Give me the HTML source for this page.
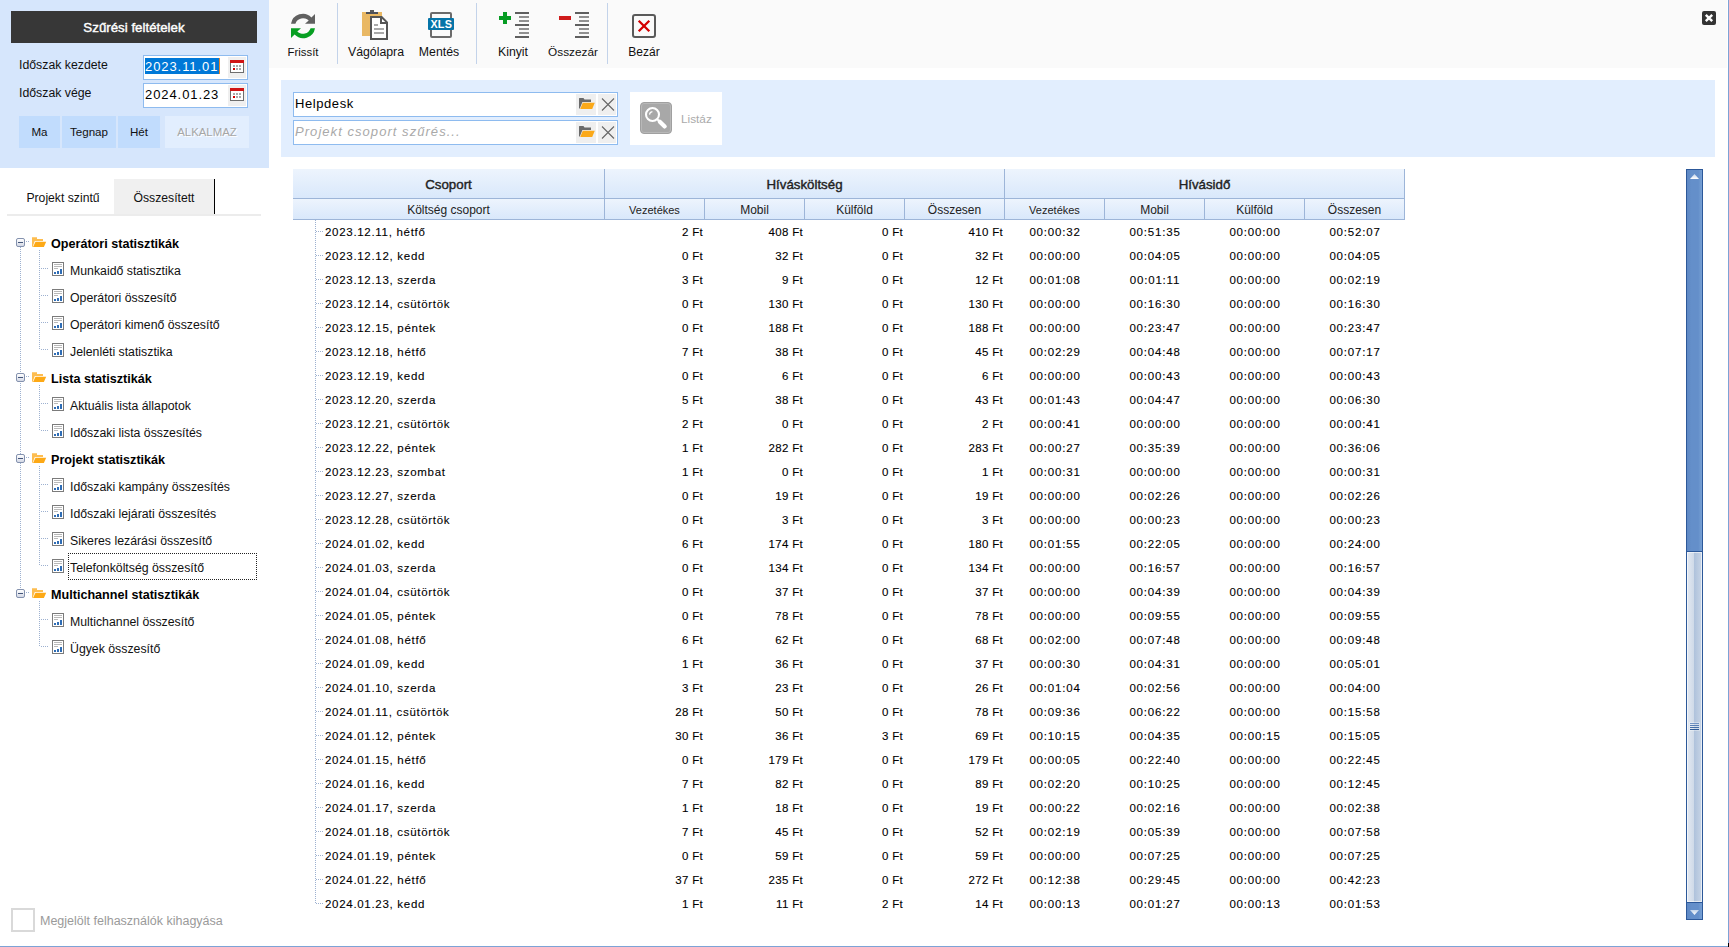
<!DOCTYPE html>
<html>
<head>
<meta charset="utf-8">
<title>Telefonköltség összesítő</title>
<style>
*{box-sizing:border-box;margin:0;padding:0}
html,body{width:1729px;height:947px;overflow:hidden;background:#fff}
body{font-family:"Liberation Sans",sans-serif;color:#000;position:relative}
.a{position:absolute;white-space:nowrap}
svg{position:absolute;display:block;overflow:visible}
#lp{left:0;top:0;width:269px;height:168px;background:#d6e6fc}
#ttl{left:11px;top:11px;width:246px;height:32px;background:#373737;color:#fff;font-size:13.3px;-webkit-text-stroke:0.4px #fff;line-height:33px;text-align:center}
.lbl{font-size:12.3px;line-height:16px;color:#111}
.din{left:143px;width:105px;height:25px;background:#fff;border:1px solid #8ebbef}
.din .t{left:1px;top:2px;height:17px;line-height:17px;font-size:13px;letter-spacing:0.92px;color:#000}
.din .cal{left:84px;top:1px;width:18px;height:21px;background:#efefef}
.qb{top:116px;height:32px;background:#c1dcfd;font-size:11.6px;line-height:32px;text-align:center;color:#111}
.tab{top:179px;height:35px;font-size:12.2px;line-height:38px;text-align:center;color:#111}
.tg{font-weight:bold;font-size:12.6px;line-height:16px;left:51px;color:#000}
.tl{font-size:12.3px;line-height:16px;left:70px;color:#111}
.vd{width:1px;background-image:linear-gradient(#9db1d0 50%,transparent 50%);background-size:1px 2px}
.hd{height:1px;background-image:linear-gradient(90deg,#9db1d0 50%,transparent 50%);background-size:2px 1px}
.ex{width:9px;height:9px;border:1px solid #8492ae;border-radius:2px;background:linear-gradient(#fff,#d4d9e6)}
.ex i{position:absolute;left:1px;top:3px;width:5px;height:1px;background:#44567a}
#tb{left:269px;top:0;width:1458px;height:68px;background:#fafafa}
.tbl{top:44px;font-size:12.3px;line-height:16px;color:#111;text-align:center}
.sep{top:3px;width:1px;height:61px;background:#c3d3ea}
#fb{left:281px;top:80px;width:1434px;height:77px;background:#e2eefe}
.fin{left:293px;width:325px;height:25px;background:#fff;border:1px solid #8ebbef}
.fin .t{left:1px;top:2px;line-height:18px;font-size:13px;letter-spacing:0.58px}
.fin .b{top:1px;height:21px;background:#efefef}
.hc{background:linear-gradient(#edf4fd,#d9e8fb);border-right:1px solid #9db5d8;border-bottom:1px solid #9db5d8;text-align:center;color:#222}
.h1{top:169px;height:30px;font-size:13.3px;-webkit-text-stroke:0.4px #222;line-height:31px}
.h2{top:199px;height:21px;font-size:12px;line-height:22px}
#rows{left:293px;top:220px;width:1112px}
.r{position:relative;height:24px;font-size:11.5px;line-height:24px;letter-spacing:0.7px;color:#000;-webkit-text-stroke:0.1px #000}
.r span{position:absolute;top:0;white-space:nowrap}
.r .c0{left:32px}
.r .m{text-align:right;width:98px;letter-spacing:0.32px}
.r .tm{text-align:center;width:100px;letter-spacing:0.8px}
</style>
</head>
<body>
<!-- LEFT PANEL -->
<div class="a" id="lp"></div>
<div class="a" id="ttl">Szűrési feltételek</div>
<div class="a lbl" style="left:19px;top:57px">Időszak kezdete</div>
<div class="a lbl" style="left:19px;top:85px">Időszak vége</div>
<div class="a din" style="top:55px"><div class="a" style="left:1px;top:2px;width:74px;height:16px;background:#0078d7"></div><div class="a t" style="color:#fff">2023.11.01</div><div class="a" style="left:75px;top:2px;width:1px;height:16px;background:#e8862a"></div><div class="a cal"><svg style="left:2px;top:3px" width="14" height="13" viewBox="0 0 14 13" shape-rendering="crispEdges"><rect x="0.5" y="0.5" width="13" height="12" fill="#fff" stroke="#6e6e6e"/><rect x="0" y="0" width="14" height="3" fill="#d01414"/><rect x="3" y="5" width="2" height="2" fill="#aaa"/><rect x="6" y="5" width="2" height="2" fill="#aaa"/><rect x="9" y="5" width="2" height="2" fill="#aaa"/><rect x="3" y="8" width="2" height="2" fill="#d40000"/><rect x="6" y="8" width="2" height="2" fill="#aaa"/><rect x="9" y="8" width="2" height="2" fill="#aaa"/></svg></div></div>
<div class="a din" style="top:83px"><div class="a t">2024.01.23</div><div class="a cal"><svg style="left:2px;top:3px" width="14" height="13" viewBox="0 0 14 13" shape-rendering="crispEdges"><rect x="0.5" y="0.5" width="13" height="12" fill="#fff" stroke="#6e6e6e"/><rect x="0" y="0" width="14" height="3" fill="#d01414"/><rect x="3" y="5" width="2" height="2" fill="#aaa"/><rect x="6" y="5" width="2" height="2" fill="#aaa"/><rect x="9" y="5" width="2" height="2" fill="#aaa"/><rect x="3" y="8" width="2" height="2" fill="#d40000"/><rect x="6" y="8" width="2" height="2" fill="#aaa"/><rect x="9" y="8" width="2" height="2" fill="#aaa"/></svg></div></div>
<div class="a qb" style="left:19px;width:41px">Ma</div>
<div class="a qb" style="left:62px;width:54px">Tegnap</div>
<div class="a qb" style="left:118px;width:42px">Hét</div>
<div class="a qb" style="left:165px;width:84px;background:#e2eefe;color:#a6a6a6;font-size:11.4px;text-shadow:1px 1px 0 #fff">ALKALMAZ</div>
<!-- TABS -->
<div class="a tab" style="left:13px;width:100px">Projekt szintű</div>
<div class="a tab" style="left:114px;width:100px;background:#f0f0f0">Összesített</div>
<div class="a" style="left:214px;top:179px;width:1px;height:35px;background:#000"></div>
<div class="a" style="left:7px;top:214px;width:254px;height:2px;background:#ececec"></div>
<!-- TREE -->
<div class="a vd" style="left:20px;top:247px;height:342px"></div>
<div class="a ex" style="left:16px;top:238px"><i></i></div>
<div class="a hd" style="left:26px;top:241px;width:4px"></div>
<svg style="left:32px;top:237px" width="15" height="10" viewBox="0 0 15 10"><path d="M0,0.3 h5 v1.7 h6 v2 h-8.2 l-2.3,6 h-0.5z" fill="#fdbd50"/><path d="M3.5,4.8 h10.7 l-2.3,5.2 h-10.9z" fill="#fda916"/></svg>
<div class="a tg" style="top:236px">Operátori statisztikák</div>
<div class="a vd" style="left:39px;top:250px;height:100px"></div>
<div class="a hd" style="left:41px;top:268px;width:8px"></div>
<svg style="left:52px;top:262px" width="12" height="14" viewBox="0 0 12 14" shape-rendering="crispEdges"><rect x="0.5" y="0.5" width="11" height="13" fill="#fff" stroke="#7b7b7b"/><rect x="2" y="2" width="8" height="1" fill="#b9b9b9"/><rect x="2" y="4" width="8" height="1" fill="#b9b9b9"/><rect x="2" y="6" width="4" height="1" fill="#b9b9b9"/><rect x="2" y="10" width="2" height="2" fill="#2f6db5"/><rect x="5" y="9" width="2" height="3" fill="#2f6db5"/><rect x="8" y="7" width="2" height="5" fill="#2f6db5"/></svg>
<div class="a tl" style="top:263px">Munkaidő statisztika</div>
<div class="a hd" style="left:41px;top:295px;width:8px"></div>
<svg style="left:52px;top:289px" width="12" height="14" viewBox="0 0 12 14" shape-rendering="crispEdges"><rect x="0.5" y="0.5" width="11" height="13" fill="#fff" stroke="#7b7b7b"/><rect x="2" y="2" width="8" height="1" fill="#b9b9b9"/><rect x="2" y="4" width="8" height="1" fill="#b9b9b9"/><rect x="2" y="6" width="4" height="1" fill="#b9b9b9"/><rect x="2" y="10" width="2" height="2" fill="#2f6db5"/><rect x="5" y="9" width="2" height="3" fill="#2f6db5"/><rect x="8" y="7" width="2" height="5" fill="#2f6db5"/></svg>
<div class="a tl" style="top:290px">Operátori összesítő</div>
<div class="a hd" style="left:41px;top:322px;width:8px"></div>
<svg style="left:52px;top:316px" width="12" height="14" viewBox="0 0 12 14" shape-rendering="crispEdges"><rect x="0.5" y="0.5" width="11" height="13" fill="#fff" stroke="#7b7b7b"/><rect x="2" y="2" width="8" height="1" fill="#b9b9b9"/><rect x="2" y="4" width="8" height="1" fill="#b9b9b9"/><rect x="2" y="6" width="4" height="1" fill="#b9b9b9"/><rect x="2" y="10" width="2" height="2" fill="#2f6db5"/><rect x="5" y="9" width="2" height="3" fill="#2f6db5"/><rect x="8" y="7" width="2" height="5" fill="#2f6db5"/></svg>
<div class="a tl" style="top:317px">Operátori kimenő összesítő</div>
<div class="a hd" style="left:41px;top:349px;width:8px"></div>
<svg style="left:52px;top:343px" width="12" height="14" viewBox="0 0 12 14" shape-rendering="crispEdges"><rect x="0.5" y="0.5" width="11" height="13" fill="#fff" stroke="#7b7b7b"/><rect x="2" y="2" width="8" height="1" fill="#b9b9b9"/><rect x="2" y="4" width="8" height="1" fill="#b9b9b9"/><rect x="2" y="6" width="4" height="1" fill="#b9b9b9"/><rect x="2" y="10" width="2" height="2" fill="#2f6db5"/><rect x="5" y="9" width="2" height="3" fill="#2f6db5"/><rect x="8" y="7" width="2" height="5" fill="#2f6db5"/></svg>
<div class="a tl" style="top:344px">Jelenléti statisztika</div>
<div class="a ex" style="left:16px;top:373px"><i></i></div>
<div class="a hd" style="left:26px;top:376px;width:4px"></div>
<svg style="left:32px;top:372px" width="15" height="10" viewBox="0 0 15 10"><path d="M0,0.3 h5 v1.7 h6 v2 h-8.2 l-2.3,6 h-0.5z" fill="#fdbd50"/><path d="M3.5,4.8 h10.7 l-2.3,5.2 h-10.9z" fill="#fda916"/></svg>
<div class="a tg" style="top:371px">Lista statisztikák</div>
<div class="a vd" style="left:39px;top:385px;height:46px"></div>
<div class="a hd" style="left:41px;top:403px;width:8px"></div>
<svg style="left:52px;top:397px" width="12" height="14" viewBox="0 0 12 14" shape-rendering="crispEdges"><rect x="0.5" y="0.5" width="11" height="13" fill="#fff" stroke="#7b7b7b"/><rect x="2" y="2" width="8" height="1" fill="#b9b9b9"/><rect x="2" y="4" width="8" height="1" fill="#b9b9b9"/><rect x="2" y="6" width="4" height="1" fill="#b9b9b9"/><rect x="2" y="10" width="2" height="2" fill="#2f6db5"/><rect x="5" y="9" width="2" height="3" fill="#2f6db5"/><rect x="8" y="7" width="2" height="5" fill="#2f6db5"/></svg>
<div class="a tl" style="top:398px">Aktuális lista állapotok</div>
<div class="a hd" style="left:41px;top:430px;width:8px"></div>
<svg style="left:52px;top:424px" width="12" height="14" viewBox="0 0 12 14" shape-rendering="crispEdges"><rect x="0.5" y="0.5" width="11" height="13" fill="#fff" stroke="#7b7b7b"/><rect x="2" y="2" width="8" height="1" fill="#b9b9b9"/><rect x="2" y="4" width="8" height="1" fill="#b9b9b9"/><rect x="2" y="6" width="4" height="1" fill="#b9b9b9"/><rect x="2" y="10" width="2" height="2" fill="#2f6db5"/><rect x="5" y="9" width="2" height="3" fill="#2f6db5"/><rect x="8" y="7" width="2" height="5" fill="#2f6db5"/></svg>
<div class="a tl" style="top:425px">Időszaki lista összesítés</div>
<div class="a ex" style="left:16px;top:454px"><i></i></div>
<div class="a hd" style="left:26px;top:457px;width:4px"></div>
<svg style="left:32px;top:453px" width="15" height="10" viewBox="0 0 15 10"><path d="M0,0.3 h5 v1.7 h6 v2 h-8.2 l-2.3,6 h-0.5z" fill="#fdbd50"/><path d="M3.5,4.8 h10.7 l-2.3,5.2 h-10.9z" fill="#fda916"/></svg>
<div class="a tg" style="top:452px">Projekt statisztikák</div>
<div class="a vd" style="left:39px;top:466px;height:100px"></div>
<div class="a hd" style="left:41px;top:484px;width:8px"></div>
<svg style="left:52px;top:478px" width="12" height="14" viewBox="0 0 12 14" shape-rendering="crispEdges"><rect x="0.5" y="0.5" width="11" height="13" fill="#fff" stroke="#7b7b7b"/><rect x="2" y="2" width="8" height="1" fill="#b9b9b9"/><rect x="2" y="4" width="8" height="1" fill="#b9b9b9"/><rect x="2" y="6" width="4" height="1" fill="#b9b9b9"/><rect x="2" y="10" width="2" height="2" fill="#2f6db5"/><rect x="5" y="9" width="2" height="3" fill="#2f6db5"/><rect x="8" y="7" width="2" height="5" fill="#2f6db5"/></svg>
<div class="a tl" style="top:479px">Időszaki kampány összesítés</div>
<div class="a hd" style="left:41px;top:511px;width:8px"></div>
<svg style="left:52px;top:505px" width="12" height="14" viewBox="0 0 12 14" shape-rendering="crispEdges"><rect x="0.5" y="0.5" width="11" height="13" fill="#fff" stroke="#7b7b7b"/><rect x="2" y="2" width="8" height="1" fill="#b9b9b9"/><rect x="2" y="4" width="8" height="1" fill="#b9b9b9"/><rect x="2" y="6" width="4" height="1" fill="#b9b9b9"/><rect x="2" y="10" width="2" height="2" fill="#2f6db5"/><rect x="5" y="9" width="2" height="3" fill="#2f6db5"/><rect x="8" y="7" width="2" height="5" fill="#2f6db5"/></svg>
<div class="a tl" style="top:506px">Időszaki lejárati összesítés</div>
<div class="a hd" style="left:41px;top:538px;width:8px"></div>
<svg style="left:52px;top:532px" width="12" height="14" viewBox="0 0 12 14" shape-rendering="crispEdges"><rect x="0.5" y="0.5" width="11" height="13" fill="#fff" stroke="#7b7b7b"/><rect x="2" y="2" width="8" height="1" fill="#b9b9b9"/><rect x="2" y="4" width="8" height="1" fill="#b9b9b9"/><rect x="2" y="6" width="4" height="1" fill="#b9b9b9"/><rect x="2" y="10" width="2" height="2" fill="#2f6db5"/><rect x="5" y="9" width="2" height="3" fill="#2f6db5"/><rect x="8" y="7" width="2" height="5" fill="#2f6db5"/></svg>
<div class="a tl" style="top:533px">Sikeres lezárási összesítő</div>
<div class="a hd" style="left:41px;top:565px;width:8px"></div>
<svg style="left:52px;top:559px" width="12" height="14" viewBox="0 0 12 14" shape-rendering="crispEdges"><rect x="0.5" y="0.5" width="11" height="13" fill="#fff" stroke="#7b7b7b"/><rect x="2" y="2" width="8" height="1" fill="#b9b9b9"/><rect x="2" y="4" width="8" height="1" fill="#b9b9b9"/><rect x="2" y="6" width="4" height="1" fill="#b9b9b9"/><rect x="2" y="10" width="2" height="2" fill="#2f6db5"/><rect x="5" y="9" width="2" height="3" fill="#2f6db5"/><rect x="8" y="7" width="2" height="5" fill="#2f6db5"/></svg>
<div class="a tl" style="top:560px">Telefonköltség összesítő</div>
<div class="a" style="left:68px;top:553px;width:189px;height:27px;border:1px dotted #222"></div>
<div class="a ex" style="left:16px;top:589px"><i></i></div>
<div class="a hd" style="left:26px;top:592px;width:4px"></div>
<svg style="left:32px;top:588px" width="15" height="10" viewBox="0 0 15 10"><path d="M0,0.3 h5 v1.7 h6 v2 h-8.2 l-2.3,6 h-0.5z" fill="#fdbd50"/><path d="M3.5,4.8 h10.7 l-2.3,5.2 h-10.9z" fill="#fda916"/></svg>
<div class="a tg" style="top:587px">Multichannel statisztikák</div>
<div class="a vd" style="left:39px;top:601px;height:46px"></div>
<div class="a hd" style="left:41px;top:619px;width:8px"></div>
<svg style="left:52px;top:613px" width="12" height="14" viewBox="0 0 12 14" shape-rendering="crispEdges"><rect x="0.5" y="0.5" width="11" height="13" fill="#fff" stroke="#7b7b7b"/><rect x="2" y="2" width="8" height="1" fill="#b9b9b9"/><rect x="2" y="4" width="8" height="1" fill="#b9b9b9"/><rect x="2" y="6" width="4" height="1" fill="#b9b9b9"/><rect x="2" y="10" width="2" height="2" fill="#2f6db5"/><rect x="5" y="9" width="2" height="3" fill="#2f6db5"/><rect x="8" y="7" width="2" height="5" fill="#2f6db5"/></svg>
<div class="a tl" style="top:614px">Multichannel összesítő</div>
<div class="a hd" style="left:41px;top:646px;width:8px"></div>
<svg style="left:52px;top:640px" width="12" height="14" viewBox="0 0 12 14" shape-rendering="crispEdges"><rect x="0.5" y="0.5" width="11" height="13" fill="#fff" stroke="#7b7b7b"/><rect x="2" y="2" width="8" height="1" fill="#b9b9b9"/><rect x="2" y="4" width="8" height="1" fill="#b9b9b9"/><rect x="2" y="6" width="4" height="1" fill="#b9b9b9"/><rect x="2" y="10" width="2" height="2" fill="#2f6db5"/><rect x="5" y="9" width="2" height="3" fill="#2f6db5"/><rect x="8" y="7" width="2" height="5" fill="#2f6db5"/></svg>
<div class="a tl" style="top:641px">Ügyek összesítő</div>
<!-- CHECKBOX -->
<div class="a" style="left:11px;top:908px;width:24px;height:24px;border:2px solid #d9d9d9;background:#fff"></div>
<div class="a" style="left:40px;top:913px;font-size:12.5px;line-height:16px;color:#9a9a9a">Megjelölt felhasználók kihagyása</div>
<!-- TOOLBAR -->
<div class="a" id="tb"></div>
<div class="a sep" style="left:337px"></div>
<div class="a sep" style="left:476px"></div>
<div class="a sep" style="left:607px"></div>
<svg style="left:291px;top:14px" width="24" height="24" viewBox="0 0 24 24"><path d="M0,9.8 A12,12 0 0 1 20.4,3.4 L24,0 V9.8 H14 L17.7,6.6 A8,8 0 0 0 4.4,9.8z" fill="#606060"/><path transform="rotate(180 12 12)" d="M0,9.8 A12,12 0 0 1 20.4,3.4 L24,0 V9.8 H14 L17.7,6.6 A8,8 0 0 0 4.4,9.8z" fill="#079f22"/></svg>
<svg style="left:362px;top:10px" width="26" height="30" viewBox="0 0 26 30"><rect x="0" y="2" width="20" height="24" fill="#e9b864"/><rect x="4" y="2" width="12" height="2" fill="#4d5058"/><rect x="8" y="0" width="4" height="2" fill="#5a5a5a"/><path d="M9,7 H19.6 L25,12.4 V29 H9z" fill="#fff" stroke="#555" stroke-width="2"/><path d="M19,7 V13 H25" fill="none" stroke="#555" stroke-width="2"/><rect x="12" y="14" width="4" height="2" fill="#aaa"/><rect x="12" y="18" width="10" height="2" fill="#aaa"/><rect x="12" y="22" width="10" height="2" fill="#aaa"/></svg>
<div class="a" style="left:430px;top:12px;width:22px;height:26px;border:2px solid #6b6b6b;border-radius:2px;background:#fafafa"></div>
<div class="a" style="left:428px;top:18px;width:26px;height:12px;background:#0574a8;border-radius:1px;color:#fff;font-weight:bold;font-size:10.8px;line-height:12px;text-align:center;letter-spacing:0.2px;padding-left:0.5px">XLS</div>
<div class="a" style="left:499px;top:16px;width:12px;height:4px;background:#069c23"></div><div class="a" style="left:503px;top:12px;width:4px;height:12px;background:#069c23"></div>
<div class="a" style="left:515px;top:12px;width:14px;height:2px;background:#5f5f5f"></div><div class="a" style="left:519px;top:16px;width:10px;height:2px;background:#909090"></div><div class="a" style="left:519px;top:20px;width:10px;height:2px;background:#909090"></div><div class="a" style="left:515px;top:24px;width:14px;height:2px;background:#5f5f5f"></div><div class="a" style="left:519px;top:28px;width:10px;height:2px;background:#909090"></div><div class="a" style="left:519px;top:32px;width:10px;height:2px;background:#909090"></div><div class="a" style="left:515px;top:36px;width:14px;height:2px;background:#5f5f5f"></div>
<div class="a" style="left:559px;top:16px;width:12px;height:4px;background:#cf1b1b"></div>
<div class="a" style="left:575px;top:12px;width:14px;height:2px;background:#5f5f5f"></div><div class="a" style="left:579px;top:16px;width:10px;height:2px;background:#909090"></div><div class="a" style="left:579px;top:20px;width:10px;height:2px;background:#909090"></div><div class="a" style="left:575px;top:24px;width:14px;height:2px;background:#5f5f5f"></div><div class="a" style="left:579px;top:28px;width:10px;height:2px;background:#909090"></div><div class="a" style="left:579px;top:32px;width:10px;height:2px;background:#909090"></div><div class="a" style="left:575px;top:36px;width:14px;height:2px;background:#5f5f5f"></div>
<div class="a" style="left:632px;top:14px;width:24px;height:24px;border:2px solid #5a5a5a;border-radius:3px;background:#fafafa"></div>
<svg style="left:638px;top:20px" width="12" height="12" viewBox="0 0 12 12"><path d="M0.7,0.7 L11.3,11.3 M11.3,0.7 L0.7,11.3" stroke="#d40000" stroke-width="2.3" fill="none"/></svg>
<div class="a tbl" style="left:273px;width:60px;font-size:11.4px">Frissít</div>
<div class="a tbl" style="left:341px;width:70px">Vágólapra</div>
<div class="a tbl" style="left:409px;width:60px">Mentés</div>
<div class="a tbl" style="left:483px;width:60px">Kinyit</div>
<div class="a tbl" style="left:538px;width:70px;font-size:11.8px">Összezár</div>
<div class="a tbl" style="left:614px;width:60px;font-size:12px">Bezár</div>
<div class="a" style="left:1702px;top:11px;width:14px;height:14px;background:#333;border-radius:2px"></div>
<svg style="left:1705px;top:14px" width="8" height="8" viewBox="0 0 8 8"><path d="M0.8,0.8 L7.2,7.2 M7.2,0.8 L0.8,7.2" stroke="#fff" stroke-width="2.4" fill="none"/></svg>
<!-- FILTER BAR -->
<div class="a" id="fb"></div>
<div class="a fin" style="top:92px"><div class="a t">Helpdesk</div><div class="a b" style="left:282px;width:20px"><svg style="left:3px;top:4px" width="16" height="11" viewBox="0 0 16 11"><path d="M0,0.5 q0,-0.5 0.5,-0.5 h4 l1,1.6 h6.5 v2.4 h-8.6 l-2.6,6.5 h-0.8z" fill="#6a6a6a"/><path d="M3.8,4.8 h12 l-2.6,6.2 h-12z" fill="#fba919"/></svg></div><div class="a b" style="left:304px;width:18px"><svg style="left:4px;top:4px" width="12" height="13" viewBox="0 0 12 13"><path d="M0,0.5 L12,12.5 M12,0.5 L0,12.5" stroke="#666" stroke-width="1.1" fill="none"/></svg></div></div>
<div class="a fin" style="top:120px"><div class="a t" style="color:#a9a9a9;font-style:italic;letter-spacing:1.05px">Projekt csoport szűrés...</div><div class="a b" style="left:282px;width:20px"><svg style="left:3px;top:4px" width="16" height="11" viewBox="0 0 16 11"><path d="M0,0.5 q0,-0.5 0.5,-0.5 h4 l1,1.6 h6.5 v2.4 h-8.6 l-2.6,6.5 h-0.8z" fill="#6a6a6a"/><path d="M3.8,4.8 h12 l-2.6,6.2 h-12z" fill="#fba919"/></svg></div><div class="a b" style="left:304px;width:18px"><svg style="left:4px;top:4px" width="12" height="13" viewBox="0 0 12 13"><path d="M0,0.5 L12,12.5 M12,0.5 L0,12.5" stroke="#666" stroke-width="1.1" fill="none"/></svg></div></div>
<div class="a" style="left:630px;top:92px;width:92px;height:53px;background:#fff"></div>
<div class="a" style="left:640px;top:102px;width:32px;height:32px;background:#a8a8a8;border:1px solid #a0a0a0;border-radius:4px;box-shadow:inset 0 0 0 1px #b8b8b8"></div>
<svg style="left:640px;top:102px" width="32" height="32" viewBox="0 0 32 32"><circle cx="12.5" cy="12.5" r="6.5" fill="none" stroke="#fff" stroke-width="2.1"/><path d="M17,17 L19.5,19.5" stroke="#fff" stroke-width="2"/><path d="M19.8,19.7 L24.7,24.4" stroke="#fff" stroke-width="4.2" stroke-linecap="round"/><path d="M9.5,12.6 A3.4,3.4 0 0 1 12.4,9.6" stroke="#fff" stroke-width="1.2" fill="none"/></svg>
<div class="a" style="left:681px;top:111px;font-size:11.8px;line-height:16px;color:#aaa">Listáz</div>
<!-- GRID HEADER -->
<div class="a hc h1" style="left:293px;width:312px">Csoport</div>
<div class="a hc h1" style="left:605px;width:400px">Hívásköltség</div>
<div class="a hc h1" style="left:1005px;width:400px">Hívásidő</div>
<div class="a hc h2" style="left:293px;width:312px">Költség csoport</div>
<div class="a hc h2" style="left:605px;width:100px;font-size:11px">Vezetékes</div>
<div class="a hc h2" style="left:705px;width:100px">Mobil</div>
<div class="a hc h2" style="left:805px;width:100px">Külföld</div>
<div class="a hc h2" style="left:905px;width:100px">Összesen</div>
<div class="a hc h2" style="left:1005px;width:100px;font-size:11px">Vezetékes</div>
<div class="a hc h2" style="left:1105px;width:100px">Mobil</div>
<div class="a hc h2" style="left:1205px;width:100px">Külföld</div>
<div class="a hc h2" style="left:1305px;width:100px">Összesen</div>
<!-- GRID ROWS -->
<div class="a" id="rows">
<div class="a vd" style="left:22px;top:0;height:684px"></div>
<div class="r"><div class="a hd" style="left:23px;top:11px;width:8px"></div><span class="c0">2023.12.11, hétfő</span><span class="m" style="left:312px">2 Ft</span><span class="m" style="left:412px">408 Ft</span><span class="m" style="left:512px">0 Ft</span><span class="m" style="left:612px">410 Ft</span><span class="tm" style="left:712px">00:00:32</span><span class="tm" style="left:812px">00:51:35</span><span class="tm" style="left:912px">00:00:00</span><span class="tm" style="left:1012px">00:52:07</span></div>
<div class="r"><div class="a hd" style="left:23px;top:11px;width:8px"></div><span class="c0">2023.12.12, kedd</span><span class="m" style="left:312px">0 Ft</span><span class="m" style="left:412px">32 Ft</span><span class="m" style="left:512px">0 Ft</span><span class="m" style="left:612px">32 Ft</span><span class="tm" style="left:712px">00:00:00</span><span class="tm" style="left:812px">00:04:05</span><span class="tm" style="left:912px">00:00:00</span><span class="tm" style="left:1012px">00:04:05</span></div>
<div class="r"><div class="a hd" style="left:23px;top:11px;width:8px"></div><span class="c0">2023.12.13, szerda</span><span class="m" style="left:312px">3 Ft</span><span class="m" style="left:412px">9 Ft</span><span class="m" style="left:512px">0 Ft</span><span class="m" style="left:612px">12 Ft</span><span class="tm" style="left:712px">00:01:08</span><span class="tm" style="left:812px">00:01:11</span><span class="tm" style="left:912px">00:00:00</span><span class="tm" style="left:1012px">00:02:19</span></div>
<div class="r"><div class="a hd" style="left:23px;top:11px;width:8px"></div><span class="c0">2023.12.14, csütörtök</span><span class="m" style="left:312px">0 Ft</span><span class="m" style="left:412px">130 Ft</span><span class="m" style="left:512px">0 Ft</span><span class="m" style="left:612px">130 Ft</span><span class="tm" style="left:712px">00:00:00</span><span class="tm" style="left:812px">00:16:30</span><span class="tm" style="left:912px">00:00:00</span><span class="tm" style="left:1012px">00:16:30</span></div>
<div class="r"><div class="a hd" style="left:23px;top:11px;width:8px"></div><span class="c0">2023.12.15, péntek</span><span class="m" style="left:312px">0 Ft</span><span class="m" style="left:412px">188 Ft</span><span class="m" style="left:512px">0 Ft</span><span class="m" style="left:612px">188 Ft</span><span class="tm" style="left:712px">00:00:00</span><span class="tm" style="left:812px">00:23:47</span><span class="tm" style="left:912px">00:00:00</span><span class="tm" style="left:1012px">00:23:47</span></div>
<div class="r"><div class="a hd" style="left:23px;top:11px;width:8px"></div><span class="c0">2023.12.18, hétfő</span><span class="m" style="left:312px">7 Ft</span><span class="m" style="left:412px">38 Ft</span><span class="m" style="left:512px">0 Ft</span><span class="m" style="left:612px">45 Ft</span><span class="tm" style="left:712px">00:02:29</span><span class="tm" style="left:812px">00:04:48</span><span class="tm" style="left:912px">00:00:00</span><span class="tm" style="left:1012px">00:07:17</span></div>
<div class="r"><div class="a hd" style="left:23px;top:11px;width:8px"></div><span class="c0">2023.12.19, kedd</span><span class="m" style="left:312px">0 Ft</span><span class="m" style="left:412px">6 Ft</span><span class="m" style="left:512px">0 Ft</span><span class="m" style="left:612px">6 Ft</span><span class="tm" style="left:712px">00:00:00</span><span class="tm" style="left:812px">00:00:43</span><span class="tm" style="left:912px">00:00:00</span><span class="tm" style="left:1012px">00:00:43</span></div>
<div class="r"><div class="a hd" style="left:23px;top:11px;width:8px"></div><span class="c0">2023.12.20, szerda</span><span class="m" style="left:312px">5 Ft</span><span class="m" style="left:412px">38 Ft</span><span class="m" style="left:512px">0 Ft</span><span class="m" style="left:612px">43 Ft</span><span class="tm" style="left:712px">00:01:43</span><span class="tm" style="left:812px">00:04:47</span><span class="tm" style="left:912px">00:00:00</span><span class="tm" style="left:1012px">00:06:30</span></div>
<div class="r"><div class="a hd" style="left:23px;top:11px;width:8px"></div><span class="c0">2023.12.21, csütörtök</span><span class="m" style="left:312px">2 Ft</span><span class="m" style="left:412px">0 Ft</span><span class="m" style="left:512px">0 Ft</span><span class="m" style="left:612px">2 Ft</span><span class="tm" style="left:712px">00:00:41</span><span class="tm" style="left:812px">00:00:00</span><span class="tm" style="left:912px">00:00:00</span><span class="tm" style="left:1012px">00:00:41</span></div>
<div class="r"><div class="a hd" style="left:23px;top:11px;width:8px"></div><span class="c0">2023.12.22, péntek</span><span class="m" style="left:312px">1 Ft</span><span class="m" style="left:412px">282 Ft</span><span class="m" style="left:512px">0 Ft</span><span class="m" style="left:612px">283 Ft</span><span class="tm" style="left:712px">00:00:27</span><span class="tm" style="left:812px">00:35:39</span><span class="tm" style="left:912px">00:00:00</span><span class="tm" style="left:1012px">00:36:06</span></div>
<div class="r"><div class="a hd" style="left:23px;top:11px;width:8px"></div><span class="c0">2023.12.23, szombat</span><span class="m" style="left:312px">1 Ft</span><span class="m" style="left:412px">0 Ft</span><span class="m" style="left:512px">0 Ft</span><span class="m" style="left:612px">1 Ft</span><span class="tm" style="left:712px">00:00:31</span><span class="tm" style="left:812px">00:00:00</span><span class="tm" style="left:912px">00:00:00</span><span class="tm" style="left:1012px">00:00:31</span></div>
<div class="r"><div class="a hd" style="left:23px;top:11px;width:8px"></div><span class="c0">2023.12.27, szerda</span><span class="m" style="left:312px">0 Ft</span><span class="m" style="left:412px">19 Ft</span><span class="m" style="left:512px">0 Ft</span><span class="m" style="left:612px">19 Ft</span><span class="tm" style="left:712px">00:00:00</span><span class="tm" style="left:812px">00:02:26</span><span class="tm" style="left:912px">00:00:00</span><span class="tm" style="left:1012px">00:02:26</span></div>
<div class="r"><div class="a hd" style="left:23px;top:11px;width:8px"></div><span class="c0">2023.12.28, csütörtök</span><span class="m" style="left:312px">0 Ft</span><span class="m" style="left:412px">3 Ft</span><span class="m" style="left:512px">0 Ft</span><span class="m" style="left:612px">3 Ft</span><span class="tm" style="left:712px">00:00:00</span><span class="tm" style="left:812px">00:00:23</span><span class="tm" style="left:912px">00:00:00</span><span class="tm" style="left:1012px">00:00:23</span></div>
<div class="r"><div class="a hd" style="left:23px;top:11px;width:8px"></div><span class="c0">2024.01.02, kedd</span><span class="m" style="left:312px">6 Ft</span><span class="m" style="left:412px">174 Ft</span><span class="m" style="left:512px">0 Ft</span><span class="m" style="left:612px">180 Ft</span><span class="tm" style="left:712px">00:01:55</span><span class="tm" style="left:812px">00:22:05</span><span class="tm" style="left:912px">00:00:00</span><span class="tm" style="left:1012px">00:24:00</span></div>
<div class="r"><div class="a hd" style="left:23px;top:11px;width:8px"></div><span class="c0">2024.01.03, szerda</span><span class="m" style="left:312px">0 Ft</span><span class="m" style="left:412px">134 Ft</span><span class="m" style="left:512px">0 Ft</span><span class="m" style="left:612px">134 Ft</span><span class="tm" style="left:712px">00:00:00</span><span class="tm" style="left:812px">00:16:57</span><span class="tm" style="left:912px">00:00:00</span><span class="tm" style="left:1012px">00:16:57</span></div>
<div class="r"><div class="a hd" style="left:23px;top:11px;width:8px"></div><span class="c0">2024.01.04, csütörtök</span><span class="m" style="left:312px">0 Ft</span><span class="m" style="left:412px">37 Ft</span><span class="m" style="left:512px">0 Ft</span><span class="m" style="left:612px">37 Ft</span><span class="tm" style="left:712px">00:00:00</span><span class="tm" style="left:812px">00:04:39</span><span class="tm" style="left:912px">00:00:00</span><span class="tm" style="left:1012px">00:04:39</span></div>
<div class="r"><div class="a hd" style="left:23px;top:11px;width:8px"></div><span class="c0">2024.01.05, péntek</span><span class="m" style="left:312px">0 Ft</span><span class="m" style="left:412px">78 Ft</span><span class="m" style="left:512px">0 Ft</span><span class="m" style="left:612px">78 Ft</span><span class="tm" style="left:712px">00:00:00</span><span class="tm" style="left:812px">00:09:55</span><span class="tm" style="left:912px">00:00:00</span><span class="tm" style="left:1012px">00:09:55</span></div>
<div class="r"><div class="a hd" style="left:23px;top:11px;width:8px"></div><span class="c0">2024.01.08, hétfő</span><span class="m" style="left:312px">6 Ft</span><span class="m" style="left:412px">62 Ft</span><span class="m" style="left:512px">0 Ft</span><span class="m" style="left:612px">68 Ft</span><span class="tm" style="left:712px">00:02:00</span><span class="tm" style="left:812px">00:07:48</span><span class="tm" style="left:912px">00:00:00</span><span class="tm" style="left:1012px">00:09:48</span></div>
<div class="r"><div class="a hd" style="left:23px;top:11px;width:8px"></div><span class="c0">2024.01.09, kedd</span><span class="m" style="left:312px">1 Ft</span><span class="m" style="left:412px">36 Ft</span><span class="m" style="left:512px">0 Ft</span><span class="m" style="left:612px">37 Ft</span><span class="tm" style="left:712px">00:00:30</span><span class="tm" style="left:812px">00:04:31</span><span class="tm" style="left:912px">00:00:00</span><span class="tm" style="left:1012px">00:05:01</span></div>
<div class="r"><div class="a hd" style="left:23px;top:11px;width:8px"></div><span class="c0">2024.01.10, szerda</span><span class="m" style="left:312px">3 Ft</span><span class="m" style="left:412px">23 Ft</span><span class="m" style="left:512px">0 Ft</span><span class="m" style="left:612px">26 Ft</span><span class="tm" style="left:712px">00:01:04</span><span class="tm" style="left:812px">00:02:56</span><span class="tm" style="left:912px">00:00:00</span><span class="tm" style="left:1012px">00:04:00</span></div>
<div class="r"><div class="a hd" style="left:23px;top:11px;width:8px"></div><span class="c0">2024.01.11, csütörtök</span><span class="m" style="left:312px">28 Ft</span><span class="m" style="left:412px">50 Ft</span><span class="m" style="left:512px">0 Ft</span><span class="m" style="left:612px">78 Ft</span><span class="tm" style="left:712px">00:09:36</span><span class="tm" style="left:812px">00:06:22</span><span class="tm" style="left:912px">00:00:00</span><span class="tm" style="left:1012px">00:15:58</span></div>
<div class="r"><div class="a hd" style="left:23px;top:11px;width:8px"></div><span class="c0">2024.01.12, péntek</span><span class="m" style="left:312px">30 Ft</span><span class="m" style="left:412px">36 Ft</span><span class="m" style="left:512px">3 Ft</span><span class="m" style="left:612px">69 Ft</span><span class="tm" style="left:712px">00:10:15</span><span class="tm" style="left:812px">00:04:35</span><span class="tm" style="left:912px">00:00:15</span><span class="tm" style="left:1012px">00:15:05</span></div>
<div class="r"><div class="a hd" style="left:23px;top:11px;width:8px"></div><span class="c0">2024.01.15, hétfő</span><span class="m" style="left:312px">0 Ft</span><span class="m" style="left:412px">179 Ft</span><span class="m" style="left:512px">0 Ft</span><span class="m" style="left:612px">179 Ft</span><span class="tm" style="left:712px">00:00:05</span><span class="tm" style="left:812px">00:22:40</span><span class="tm" style="left:912px">00:00:00</span><span class="tm" style="left:1012px">00:22:45</span></div>
<div class="r"><div class="a hd" style="left:23px;top:11px;width:8px"></div><span class="c0">2024.01.16, kedd</span><span class="m" style="left:312px">7 Ft</span><span class="m" style="left:412px">82 Ft</span><span class="m" style="left:512px">0 Ft</span><span class="m" style="left:612px">89 Ft</span><span class="tm" style="left:712px">00:02:20</span><span class="tm" style="left:812px">00:10:25</span><span class="tm" style="left:912px">00:00:00</span><span class="tm" style="left:1012px">00:12:45</span></div>
<div class="r"><div class="a hd" style="left:23px;top:11px;width:8px"></div><span class="c0">2024.01.17, szerda</span><span class="m" style="left:312px">1 Ft</span><span class="m" style="left:412px">18 Ft</span><span class="m" style="left:512px">0 Ft</span><span class="m" style="left:612px">19 Ft</span><span class="tm" style="left:712px">00:00:22</span><span class="tm" style="left:812px">00:02:16</span><span class="tm" style="left:912px">00:00:00</span><span class="tm" style="left:1012px">00:02:38</span></div>
<div class="r"><div class="a hd" style="left:23px;top:11px;width:8px"></div><span class="c0">2024.01.18, csütörtök</span><span class="m" style="left:312px">7 Ft</span><span class="m" style="left:412px">45 Ft</span><span class="m" style="left:512px">0 Ft</span><span class="m" style="left:612px">52 Ft</span><span class="tm" style="left:712px">00:02:19</span><span class="tm" style="left:812px">00:05:39</span><span class="tm" style="left:912px">00:00:00</span><span class="tm" style="left:1012px">00:07:58</span></div>
<div class="r"><div class="a hd" style="left:23px;top:11px;width:8px"></div><span class="c0">2024.01.19, péntek</span><span class="m" style="left:312px">0 Ft</span><span class="m" style="left:412px">59 Ft</span><span class="m" style="left:512px">0 Ft</span><span class="m" style="left:612px">59 Ft</span><span class="tm" style="left:712px">00:00:00</span><span class="tm" style="left:812px">00:07:25</span><span class="tm" style="left:912px">00:00:00</span><span class="tm" style="left:1012px">00:07:25</span></div>
<div class="r"><div class="a hd" style="left:23px;top:11px;width:8px"></div><span class="c0">2024.01.22, hétfő</span><span class="m" style="left:312px">37 Ft</span><span class="m" style="left:412px">235 Ft</span><span class="m" style="left:512px">0 Ft</span><span class="m" style="left:612px">272 Ft</span><span class="tm" style="left:712px">00:12:38</span><span class="tm" style="left:812px">00:29:45</span><span class="tm" style="left:912px">00:00:00</span><span class="tm" style="left:1012px">00:42:23</span></div>
<div class="r"><div class="a hd" style="left:23px;top:11px;width:8px"></div><span class="c0">2024.01.23, kedd</span><span class="m" style="left:312px">1 Ft</span><span class="m" style="left:412px">11 Ft</span><span class="m" style="left:512px">2 Ft</span><span class="m" style="left:612px">14 Ft</span><span class="tm" style="left:712px">00:00:13</span><span class="tm" style="left:812px">00:01:27</span><span class="tm" style="left:912px">00:00:13</span><span class="tm" style="left:1012px">00:01:53</span></div>
</div>
<!-- SCROLLBAR -->
<div class="a" style="left:1686px;top:169px;width:17px;height:751px;background:linear-gradient(90deg,#5d88c4,#648fca 30%,#648fca 75%,#77a0d4);border:1px solid #2c5899"></div><div class="a" style="left:1686px;top:551px;width:17px;height:352px;border:1px solid #2c5899;background:linear-gradient(90deg,#e3e9f2 0%,#cfdae8 47%,#b0c3dc 50%,#c8d5e6 100%)"><div class="a" style="left:0;top:0;width:15px;height:350px;border:1px solid rgba(255,255,255,.6)"></div></div><div class="a" style="left:1689px;top:722px;width:11px;height:9px;background:rgba(255,255,255,.35)"></div><div class="a" style="left:1690px;top:723px;width:9px;height:1px;background:#7395c4"></div><div class="a" style="left:1690px;top:725px;width:9px;height:1px;background:#5a80b5"></div><div class="a" style="left:1690px;top:727px;width:9px;height:1px;background:#4570a8"></div><div class="a" style="left:1690px;top:729px;width:9px;height:1px;background:#2f5b98"></div><svg style="left:1690px;top:174px" width="9" height="5" viewBox="0 0 9 5"><defs><linearGradient id="ga" x1="0" y1="0" x2="0" y2="1"><stop offset="0" stop-color="#c2d4eb"/><stop offset="1" stop-color="#fff"/></linearGradient></defs><path d="M4.5,0 L9,5 H0z" fill="url(#ga)"/></svg><svg style="left:1690px;top:910px" width="9" height="5" viewBox="0 0 9 5"><path d="M0,0 H9 L4.5,5z" fill="url(#ga)"/></svg>
<!-- WINDOW BORDER -->
<div class="a" style="left:1728px;top:0;width:1px;height:947px;background:#7da3d6"></div>
<div class="a" style="left:0;top:946px;width:1729px;height:1px;background:#7da3d6"></div>
<div class="a" style="left:1728px;top:943px;width:1px;height:4px;background:#000"></div>
</body>
</html>
